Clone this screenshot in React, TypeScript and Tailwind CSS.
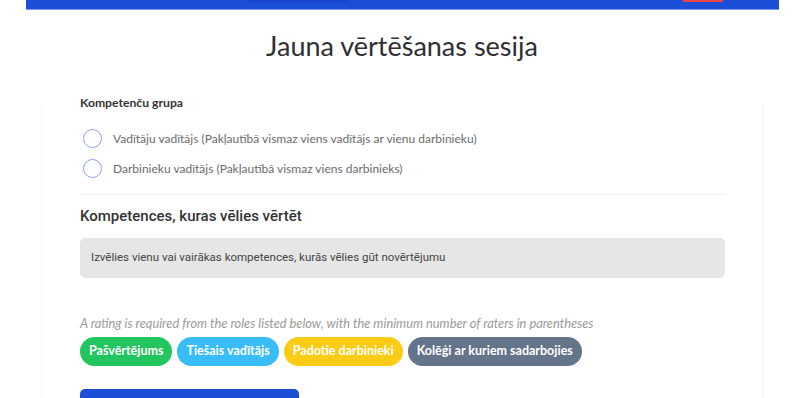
export default function App() {
  const groups = [
    "Vadītāju vadītājs (Pakļautībā vismaz viens vadītājs ar vienu darbinieku)",
    "Darbinieku vadītājs (Pakļautībā vismaz viens darbinieks)",
  ];
  const roles = [
    { name: "Pašvērtējums", cls: "bg-[#22c55e]" },
    { name: "Tiešais vadītājs", cls: "bg-[#38bdf8]" },
    { name: "Padotie darbinieki", cls: "bg-[#facc15]" },
    { name: "Kolēģi ar kuriem sadarbojies", cls: "bg-[#64748b]" },
  ];

  return (
    <div className="min-h-screen bg-white font-['Lato','Open_Sans',sans-serif] text-[#333]">
      <div className="mx-auto w-[753px]">
        <div className="flex h-[10px] bg-[#1d4ed8] border-b border-[#7d9af0]">
          <div className="ml-[221px] w-[103px] h-[3px] bg-[#1b47d0]" />
          <div className="ml-auto mr-[56px] w-[40px] h-[2px] bg-[#ef4444]" />
        </div>

        <h1 className="mt-[20px] text-center text-[27px] leading-[32px] text-[#2f2f33]">Jauna vērtēšanas sesija</h1>

        <div className="mx-auto mt-[14px] w-[722px] pl-[39px] pr-[38px] pt-[19px] pb-10">
          <div className="text-[12.2px] leading-4 font-bold text-[#333]">Kompetenču grupa</div>

          <div className="mt-[18px] flex flex-col gap-[11px]">
            {groups.map((g) => (
              <label key={g} className="flex items-center gap-[11px] pl-[3px]">
                <span className="w-[19px] h-[19px] rounded-full border-[1.5px] border-[#8ea2ea] bg-white" />
                <span className="text-[12px] leading-4 text-[#6b6b6b]">{g}</span>
              </label>
            ))}
          </div>

          <div className="mt-[16px] border-t border-[#f0f0f0]" />

          <div className="mt-[11px] font-['Roboto',sans-serif] text-[15px] leading-5 font-medium text-[#333]">Kompetences, kuras vēlies vērtēt</div>

          <div className="mt-[12px] h-[40px] flex items-center rounded-[5px] bg-[#e6e6e6] px-[11px] font-['Roboto',sans-serif] text-[11.5px] text-[#444]">
            Izvēlies vienu vai vairākas kompetences, kurās vēlies gūt novērtējumu
          </div>

          <div className="mt-[37px] text-[12.8px] leading-4 italic text-[#9a9a9a]">
            A rating is required from the roles listed below, with the minimum number of raters in parentheses
          </div>

          <div className="mt-[6px] flex gap-[5px]">
            {roles.map((r) => (
              <span key={r.name} className={`h-[29px] flex items-center rounded-full px-[9px] text-[12.5px] font-bold text-white ${r.cls}`}>
                {r.name}
              </span>
            ))}
          </div>

          <button className="mt-[23px] h-[40px] w-[219px] rounded-[5px] bg-[#1d4ed8]" />
        </div>
      </div>
      <div className="pointer-events-none fixed top-[105px] bottom-0 left-1/2 -translate-x-1/2 w-[722px] border-x border-[#f4f4f4]" />
    </div>
  );
}
